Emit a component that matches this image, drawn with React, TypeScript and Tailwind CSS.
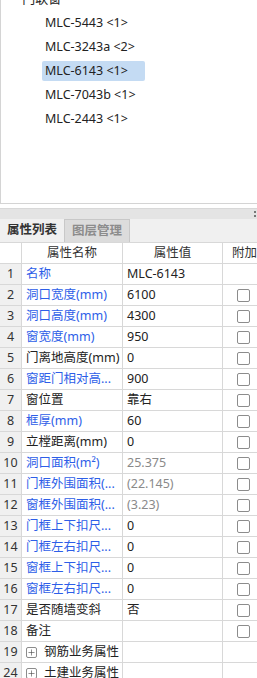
import { Plus } from 'lucide-react';

const font = 'font-["Noto_Sans","Noto_Sans_CJK_SC",sans-serif]';

type Row = { n: number; name: string; value?: string; blue?: boolean; gray?: boolean; check?: boolean; group?: boolean };

const treeItems = ['MLC-5443 <1>', 'MLC-3243a <2>', 'MLC-6143 <1>', 'MLC-7043b <1>', 'MLC-2443 <1>'];

const rows: Row[] = [
  { n: 1, name: '名称', value: 'MLC-6143', blue: true },
  { n: 2, name: '洞口宽度(mm)', value: '6100', blue: true, check: true },
  { n: 3, name: '洞口高度(mm)', value: '4300', blue: true, check: true },
  { n: 4, name: '窗宽度(mm)', value: '950', blue: true, check: true },
  { n: 5, name: '门离地高度(mm)', value: '0', check: true },
  { n: 6, name: '窗距门相对高...', value: '900', blue: true, check: true },
  { n: 7, name: '窗位置', value: '靠右', check: true },
  { n: 8, name: '框厚(mm)', value: '60', blue: true, check: true },
  { n: 9, name: '立樘距离(mm)', value: '0', check: true },
  { n: 10, name: '洞口面积(m²)', value: '25.375', blue: true, gray: true, check: true },
  { n: 11, name: '门框外围面积(...', value: '(22.145)', blue: true, gray: true, check: true },
  { n: 12, name: '窗框外围面积(...', value: '(3.23)', blue: true, gray: true, check: true },
  { n: 13, name: '门框上下扣尺...', value: '0', blue: true, check: true },
  { n: 14, name: '门框左右扣尺...', value: '0', blue: true, check: true },
  { n: 15, name: '窗框上下扣尺...', value: '0', blue: true, check: true },
  { n: 16, name: '窗框左右扣尺...', value: '0', blue: true, check: true },
  { n: 17, name: '是否随墙变斜', value: '否', check: true },
  { n: 18, name: '备注', value: '', check: true },
  { n: 19, name: '钢筋业务属性', group: true },
  { n: 24, name: '土建业务属性', group: true },
];

function Check() {
  return <span className="block h-[13px] w-[13px] rounded-[2px] border border-[#8c8c8c] bg-white" />;
}

export default function App() {
  return (
    <div className={`${font} h-[678px] w-[257px] overflow-hidden bg-white text-[12.5px] text-[#222]`}>
      {/* tree panel */}
      <div className="h-[204px] overflow-hidden border-b border-l border-[#d4d4d4] bg-white">
        <div className="-mt-[13px]">
          <div className="flex h-[24px] items-center gap-[3px] pl-[14px] text-[13px]">
            <span className="text-[#555]">-</span>
            <span>门联窗</span>
          </div>
          {treeItems.map((t, i) => (
            <div key={t} className="flex h-[24px] items-center pl-[41px]">
              <span className={`flex h-[20px] items-center rounded-[2px] pl-[3px] ${i === 2 ? 'w-[103px] bg-[#c4dbf3]' : ''}`}>
                {t}
              </span>
            </div>
          ))}
        </div>
      </div>

      {/* gap + splitter */}
      <div className="h-[4px] bg-white" />
      <div className="flex h-[11px] items-center justify-end border-t border-[#d8d8d8] bg-[#e4e4e4] pr-[1px]">
        <span className="h-[6px] w-[2px] border-y-2 border-[#777]" />
      </div>

      {/* tabs */}
      <div className="flex h-[23px] items-end bg-[#f0f0f0]">
        <div className="flex h-[23px] w-[64px] items-center justify-center font-bold text-[#333]">属性列表</div>
        <div className="flex h-[23px] w-[66px] items-center justify-center border border-b-0 border-[#c8c8c8] bg-[#dcdcdc] font-bold text-[#8c8c8c]">
          图层管理
        </div>
      </div>

      {/* grid */}
      <div className="border-t border-[#d8d8d8]">
        <div className="grid h-[21px] grid-cols-[22px_101px_100px_1fr] border-b border-[#d8d8d8] bg-white text-[#333]">
          <div className="border-r border-[#d8d8d8]" />
          <div className="flex items-center justify-center border-r border-[#d8d8d8]">属性名称</div>
          <div className="flex items-center justify-center border-r border-[#d8d8d8]">属性值</div>
          <div className="flex items-center whitespace-nowrap pl-[9px]">附加</div>
        </div>
        {rows.map((r) => (
          <div key={r.n} className="grid h-[21px] grid-cols-[22px_101px_100px_1fr] border-b border-[#d8d8d8]">
            <div className="flex items-center justify-center border-r border-[#d8d8d8] bg-[#f0f0f0] text-[#333]">{r.n}</div>
            {r.group ? (
              <div className="flex items-center gap-[7px] whitespace-nowrap border-r border-[#d8d8d8] pl-[4px]">
                <span className="flex h-[11px] w-[11px] items-center justify-center rounded-[2px] border border-[#8c8c8c]">
                  <Plus size={9} strokeWidth={1.6} className="text-[#444]" />
                </span>
                <span>{r.name}</span>
              </div>
            ) : (
              <div className={`flex items-center whitespace-nowrap border-r border-[#d8d8d8] pl-[4px] ${r.blue ? 'text-[#2d5ee8]' : ''}`}>
                {r.name}
              </div>
            )}
            <div className={`flex items-center whitespace-nowrap border-r border-[#d8d8d8] pl-[4px] ${r.gray ? 'text-[#8a8a8a]' : ''}`}>
              {r.value}
            </div>
            <div className="flex items-center pl-[14px]">{r.check && <Check />}</div>
          </div>
        ))}
      </div>
    </div>
  );
}
